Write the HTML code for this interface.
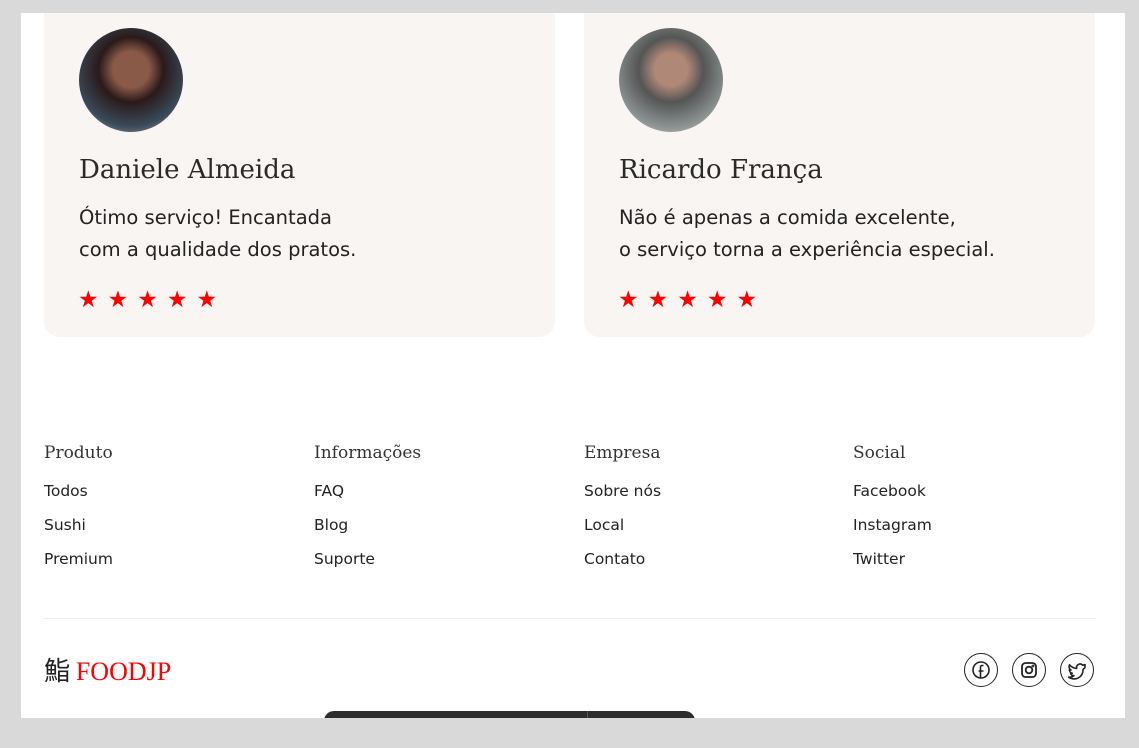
<!DOCTYPE html>
<html><head><style>
body{margin:0;width:1139px;height:748px;background:#d9d9d9;overflow:hidden;position:relative;font-family:"DejaVu Sans",sans-serif;color:#222}
.panel{position:absolute;left:21px;top:13px;width:1104px;height:705px;background:#fff;overflow:hidden}
.card{position:absolute;top:-20px;width:511px;height:344px;background:#f8f5f3;border-radius:16px}
.av{position:absolute;left:35px;top:35px;width:104px;height:104px;border-radius:50%}
.name{position:absolute;left:35px;top:162px;font-family:"DejaVu Serif",serif;font-size:26px;color:#2a2a2a}
.txt{position:absolute;left:35px;top:209px;font-size:19.5px;line-height:32px;color:#222}
.stars{position:absolute;left:34px;top:294px;color:#f00;font-size:23px;letter-spacing:9px}
.col{position:absolute;top:430px}
.col h4{margin:0 0 19px;font-family:"DejaVu Serif",serif;font-weight:normal;font-size:17px;color:#333}
.col div{font-size:15.5px;height:34px;color:#222}
.ic{position:absolute;top:640px;width:32px;height:32px;border:1.3px solid #222;border-radius:50%}
</style></head><body>
<div class="panel">
 <div class="card" style="left:23px">
  <div class="av" style="background:radial-gradient(circle at 50% 40%,#8a5a48 0 22%,#2a1a1a 40%,#3a4a5a 70%,#c9b8a8)"></div>
  <div class="name">Daniele Almeida</div>
  <div class="txt">Ótimo serviço! Encantada<br>com a qualidade dos pratos.</div>
  <div class="stars">★★★★★</div>
 </div>
 <div class="card" style="left:563px">
  <div class="av" style="background:radial-gradient(circle at 50% 40%,#b08878 0 20%,#555 40%,#8a9090 70%,#d8d0c8)"></div>
  <div class="name">Ricardo França</div>
  <div class="txt">Não é apenas a comida excelente,<br>o serviço torna a experiência especial.</div>
  <div class="stars">★★★★★</div>
 </div>
 <div class="col" style="left:23px"><h4>Produto</h4><div>Todos</div><div>Sushi</div><div>Premium</div></div>
 <div class="col" style="left:293px"><h4>Informações</h4><div>FAQ</div><div>Blog</div><div>Suporte</div></div>
 <div class="col" style="left:563px"><h4>Empresa</h4><div>Sobre nós</div><div>Local</div><div>Contato</div></div>
 <div class="col" style="left:832px"><h4>Social</h4><div>Facebook</div><div>Instagram</div><div>Twitter</div></div>
 <div style="position:absolute;left:23px;top:605px;width:1052px;height:1px;background:#eee"></div>
 <div style="position:absolute;left:23px;top:638px;font-size:26px;font-family:'Noto Sans CJK JP',sans-serif;color:#222">鮨 <span style="font-family:'Liberation Serif',serif;color:#f00;font-size:26px">FOODJP</span></div>
 <div class="ic" style="left:943px"><svg width="32" height="32" viewBox="0 0 32 32" fill="none" stroke="#222" stroke-width="1.6"><circle cx="16" cy="16" r="8"/><path d="M18.5 11.5h-1.5a1.5 1.5 0 0 0-1.5 1.5v11M13.5 17h5"/></svg></div>
 <div class="ic" style="left:991px"><svg width="32" height="32" viewBox="0 0 32 32" fill="none" stroke="#222" stroke-width="1.8"><rect x="9" y="9" width="14" height="14" rx="3.5"/><circle cx="16" cy="16" r="3.3"/><circle cx="20" cy="12" r=".5"/></svg></div>
 <div class="ic" style="left:1039px"><svg width="32" height="32" viewBox="0 0 32 32" fill="none" stroke="#222" stroke-width="1.6" stroke-linejoin="round"><path d="M24 10.5c-.8.4-1.5.6-2.3.7a3.5 3.5 0 0 0-6 3.2c-3 0-5.5-1.5-7.2-3.6-1 2-.2 4.3 1.5 5.3-.6 0-1.2-.2-1.6-.4 0 1.7 1.2 3.2 2.8 3.5-.5.2-1 .2-1.6.1.5 1.4 1.8 2.4 3.3 2.4-1.5 1.2-3.4 1.7-5.3 1.5 6.5 4 14.5.5 14.5-7.8l1.9-1.9z"/></svg></div>
 <div style="position:absolute;left:303px;top:698px;width:371px;height:20px;background:#2d2d2d;border-radius:10px 10px 0 0"><div style="position:absolute;left:263px;top:0;width:1px;height:20px;background:#555"></div></div>
</div>
</body></html>
